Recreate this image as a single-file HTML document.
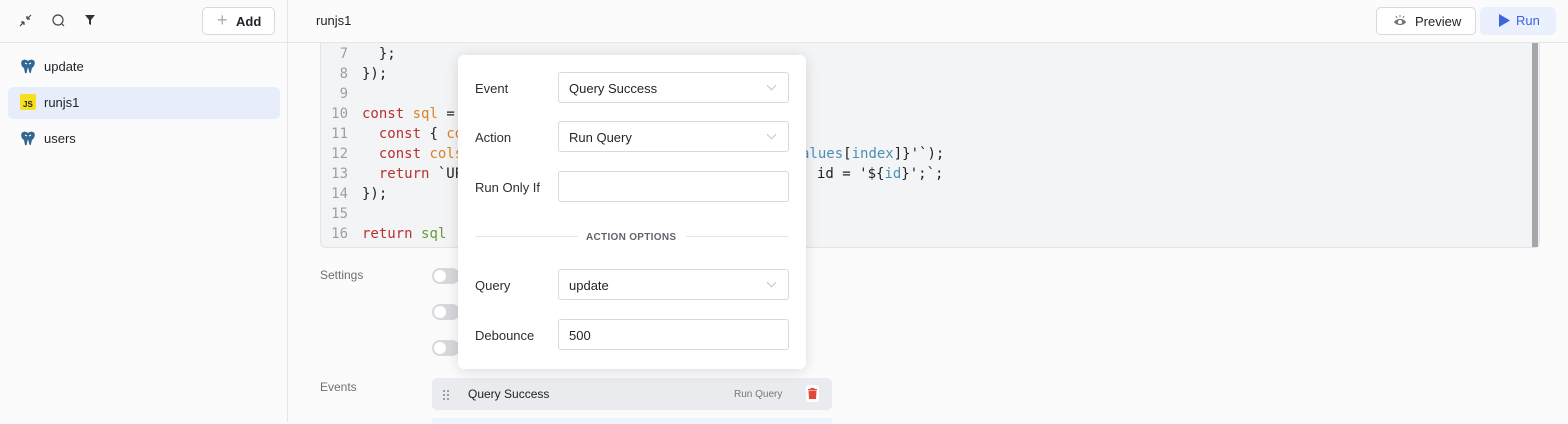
<!DOCTYPE html>
<html><head><style>
*{box-sizing:border-box;margin:0;padding:0}
body{width:1568px;height:422px;overflow:hidden;background:#fbfbfc;font-family:"Liberation Sans",sans-serif;color:#1f2328;position:relative;font-size:13px}
.abs{position:absolute}
.code{font-family:"DejaVu Sans Mono","Liberation Mono",monospace;font-size:14px;line-height:20px;white-space:pre}
.kw{color:#b8312f}.or{color:#d9822b}.gr{color:#6a9a3a}.bl{color:#4b8fb5}
.sel{position:absolute;left:558px;width:231px;height:31px;border:1px solid #d7d9dd;border-radius:3px;background:#fff;font-size:13px;padding:8px 10px}
.chev{position:absolute;right:13px;top:9px;width:7px;height:7px;border-right:1.5px solid #c2c5ca;border-bottom:1.5px solid #c2c5ca;transform:rotate(45deg)}
.lbl{position:absolute;left:475px;font-size:13px;color:#2b2f33}
.tog{position:absolute;left:432px;width:28px;height:16px;border-radius:8px;background:#d6d8dc}
.tog:after{content:"";position:absolute;left:2px;top:2px;width:12px;height:12px;border-radius:6px;background:#fff}
.dot{position:absolute;width:2px;height:2px;background:#9aa0a6}
</style></head><body>
<div class="abs" style="left:0;top:0;width:288px;height:422px;background:#fbfbfc;border-right:1px solid #e4e6e9"></div>
<div class="abs" style="left:0;top:42px;width:1568px;height:1px;background:#e4e6e9"></div>
<svg class="abs" style="left:18px;top:13px" width="15" height="15" viewBox="0 0 15 15" fill="none" stroke="#444" stroke-width="1.2"><path d="M2 13L6 9M6 9H3M6 9V12M13 2L9 6M9 6H12M9 6V3"/></svg>
<svg class="abs" style="left:51px;top:13px" width="15" height="15" viewBox="0 0 15 15" fill="none" stroke="#444" stroke-width="1.2"><circle cx="7" cy="7" r="5"/><path d="M11 11L13 13"/></svg>
<svg class="abs" style="left:84px;top:14px" width="12" height="12" viewBox="0 0 12 12"><path d="M1 1H11L7 6V11L5 10V6Z" fill="#333"/></svg>
<div class="abs" style="left:202px;top:7px;width:73px;height:28px;border:1px solid #d7d9dd;border-radius:5px;background:#fff;font-size:13px;font-weight:bold;padding:6px 0 0 33px">Add</div>
<div class="abs" style="left:217px;top:11px;font-size:18px;color:#aaa;line-height:18px">+</div>
<div class="abs" style="left:8px;top:87px;width:272px;height:32px;border-radius:5px;background:#e8edfb"></div>
<svg class="abs" style="left:20px;top:58px" width="16" height="17" viewBox="0 0 16 17"><path d="M3 2C0 3 1 9 4 10L5 15C6 16 7 15 7 13L8 9L9 13C9 15 11 16 11 14L12 10C15 8 16 3 13 2C11 1 9 2 8 3C7 2 5 1 3 2Z" fill="#336791"/><path d="M5 5L7 6M11 5L9 6" stroke="#fff" stroke-width="1"/></svg>
<svg class="abs" style="left:20px;top:130px" width="16" height="17" viewBox="0 0 16 17"><path d="M3 2C0 3 1 9 4 10L5 15C6 16 7 15 7 13L8 9L9 13C9 15 11 16 11 14L12 10C15 8 16 3 13 2C11 1 9 2 8 3C7 2 5 1 3 2Z" fill="#336791"/><path d="M5 5L7 6M11 5L9 6" stroke="#fff" stroke-width="1"/></svg>
<div class="abs" style="left:20px;top:94px;width:16px;height:16px;background:#f7df1e;border-radius:2px;font-size:8px;font-weight:bold;padding:6px 0 0 3px;line-height:9px">JS</div>
<div class="abs" style="left:44px;top:59px;font-size:13px">update</div>
<div class="abs" style="left:44px;top:95px;font-size:13px">runjs1</div>
<div class="abs" style="left:44px;top:131px;font-size:13px">users</div>
<div class="abs" style="left:316px;top:13px;font-size:13px">runjs1</div>
<div class="abs" style="left:1376px;top:7px;width:100px;height:28px;border:1px solid #d7d9dd;border-radius:5px;background:#fff;font-size:13px;padding:6px 0 0 38px">Preview</div>
<svg class="abs" style="left:1393px;top:15px" width="14" height="12" viewBox="0 0 14 12"><path d="M1 7C3 3 11 3 13 7C11 11 3 11 1 7Z" fill="#777"/><circle cx="7" cy="7" r="2" fill="#fff"/><path d="M4 3L3 1M7 2V0M10 3L11 1" stroke="#777"/></svg>
<div class="abs" style="left:1480px;top:7px;width:76px;height:28px;border-radius:5px;background:#eaf0fd;font-size:13px;color:#3d63dd;padding:6px 0 0 36px">Run</div>
<svg class="abs" style="left:1499px;top:14px" width="11" height="13" viewBox="0 0 11 13"><path d="M0 0L11 6.5L0 13Z" fill="#3d63dd"/></svg>
<div class="abs" style="left:320px;top:43px;width:1220px;height:205px;background:#f3f4f6;border-radius:0 0 6px 6px;border:1px solid #e2e4e7;border-top:none"></div>
<div class="abs" style="left:1532px;top:43px;width:6px;height:204px;background:#a4a7ac"></div>
<div class="abs code" style="left:330px;top:44px;color:#9aa0a6;text-align:right;width:18px"> 7
 8
 9
10
11
12
13
14
15
16</div>
<div class="abs code" style="left:362px;top:44px;color:#222">  };
});

<span class="kw">const</span> <span class="or">sql</span> = 
  <span class="kw">const</span> { <span class="or">co</span>
  <span class="kw">const</span> <span class="or">cols</span>
  <span class="kw">return</span> `UP
});

<span class="kw">return</span> <span class="gr">sql</span></div>
<div class="abs code" style="left:801px;top:144px;color:#222"><span class="bl">alues</span>[<span class="bl">index</span>]}'`);</div>
<div class="abs code" style="left:817px;top:164px;color:#222">id = '${<span class="bl">id</span>}';`;</div>
<div class="abs" style="left:320px;top:268px;font-size:12px;color:#6b7075">Settings</div>
<div class="abs" style="left:320px;top:380px;font-size:12px;color:#6b7075">Events</div>
<div class="tog" style="top:268px"></div><div class="tog" style="top:304px"></div><div class="tog" style="top:340px"></div>
<div class="abs" style="left:432px;top:378px;width:400px;height:32px;border-radius:5px;background:#e9ebee"></div>
<div class="dot" style="left:443px;top:390px"></div><div class="dot" style="left:447px;top:390px"></div>
<div class="dot" style="left:443px;top:394px"></div><div class="dot" style="left:447px;top:394px"></div>
<div class="dot" style="left:443px;top:398px"></div><div class="dot" style="left:447px;top:398px"></div>
<div class="abs" style="left:468px;top:387px;font-size:12px;color:#222">Query Success</div>
<div class="abs" style="left:734px;top:389px;font-size:10px;color:#777">Run Query</div>
<div class="abs" style="left:806px;top:385px;width:13px;height:17px;background:#fff;border-radius:3px"></div>
<svg class="abs" style="left:808px;top:388px" width="9" height="11" viewBox="0 0 9 11"><path d="M0 1.5H9M3 1.5V0H6V1.5M1 3H8L7.5 11H1.5Z" fill="#e5483a" stroke="#e5483a" stroke-width="1"/></svg>
<div class="abs" style="left:432px;top:418px;width:400px;height:6px;background:#eef3fc"></div>
<div class="abs" style="left:458px;top:55px;width:348px;height:314px;background:#fff;border-radius:6px;box-shadow:0 2px 14px rgba(0,0,0,0.13)"></div>
<div class="lbl" style="top:81px">Event</div>
<div class="lbl" style="top:130px">Action</div>
<div class="lbl" style="top:180px">Run Only If</div>
<div class="lbl" style="top:278px">Query</div>
<div class="lbl" style="top:328px">Debounce</div>
<div class="sel" style="top:72px">Query Success<div class="chev"></div></div>
<div class="sel" style="top:121px">Run Query<div class="chev"></div></div>
<div class="sel" style="top:171px;height:31px"></div>
<div class="sel" style="top:269px">update<div class="chev"></div></div>
<div class="sel" style="top:319px;height:31px">500</div>
<div class="abs" style="left:475px;top:236px;width:103px;height:1px;background:#e4e6e9"></div>
<div class="abs" style="left:686px;top:236px;width:103px;height:1px;background:#e4e6e9"></div>
<div class="abs" style="left:586px;top:232px;font-size:10px;font-weight:bold;color:#5f656b;letter-spacing:0.3px">ACTION OPTIONS</div>
</body></html>
